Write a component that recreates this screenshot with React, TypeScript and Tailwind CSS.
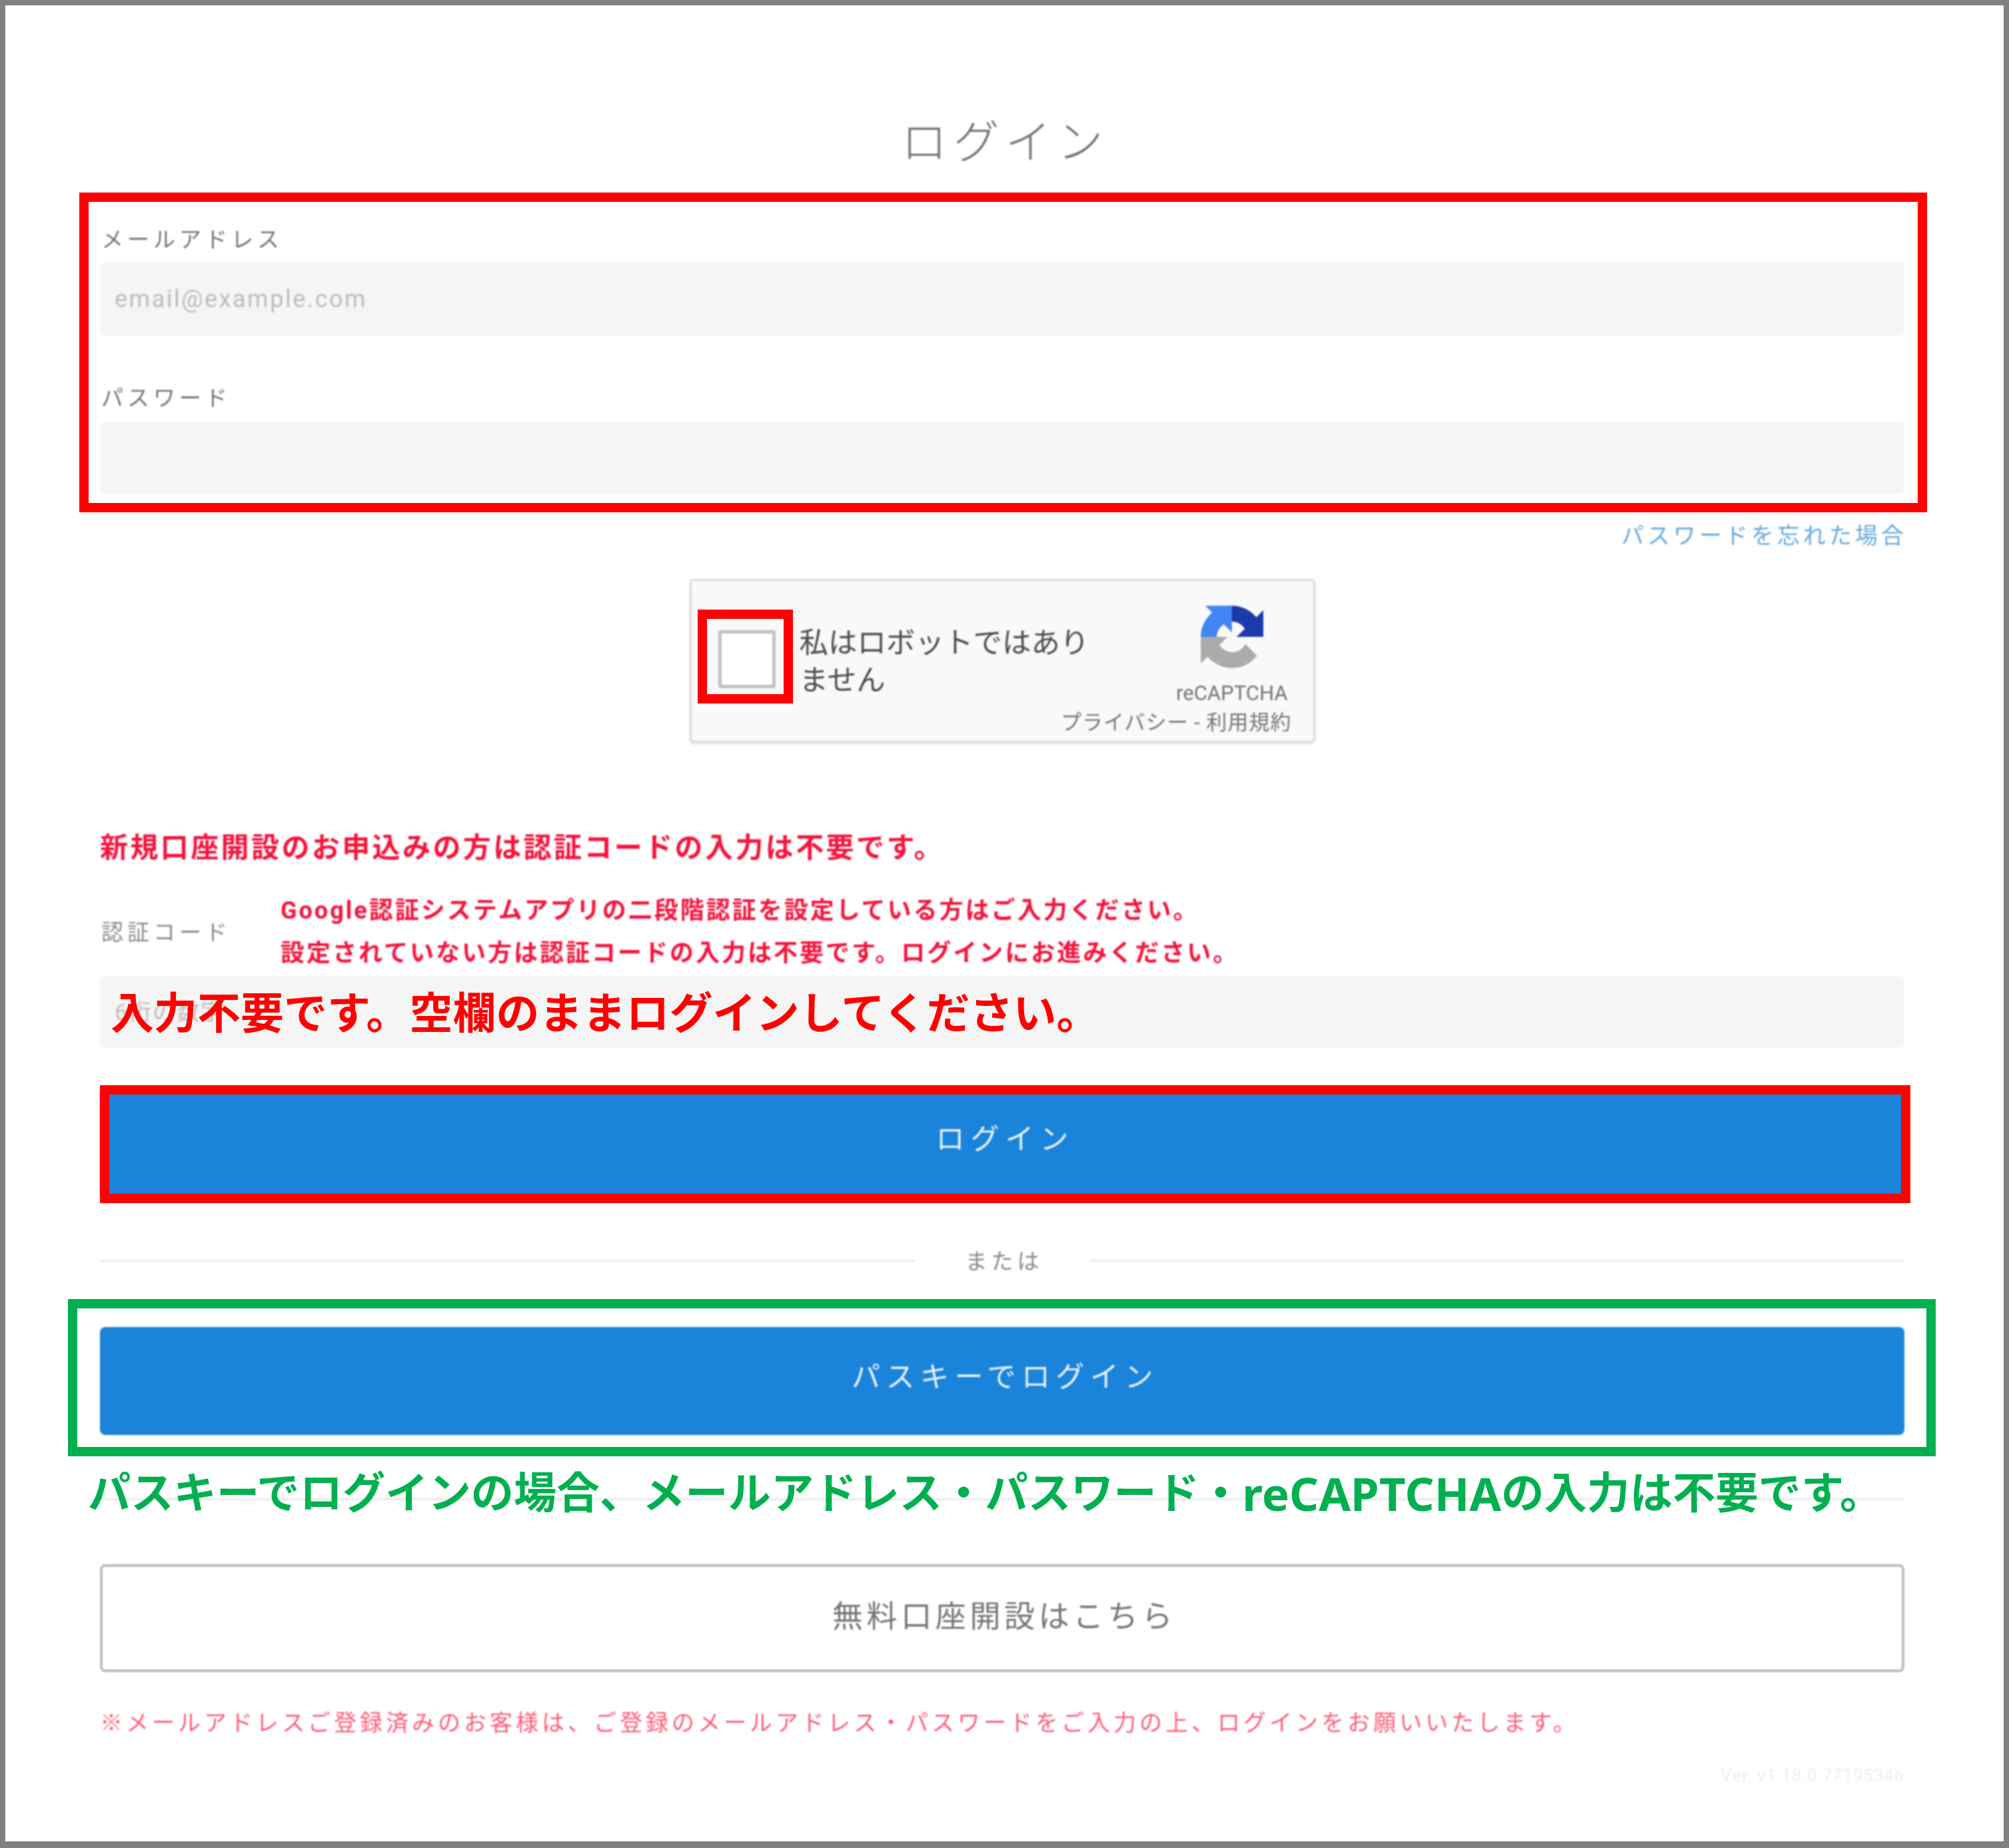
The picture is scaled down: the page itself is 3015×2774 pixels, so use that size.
const FONT = "font-['Roboto','Noto_Sans_CJK_JP',sans-serif]";

function Label({ text }: { text: string }) {
  return <div className="h-[50px] flex items-center pl-[2px] pt-[3px] text-[33px] tracking-[6px] text-[#757575]">{text}</div>;
}

function Divider() {
  return <div className="h-[3px] flex-1 bg-[#e8e8e8]" />;
}

function RecaptchaLogo() {
  return (
    <svg viewBox="0 0 64 64" className="w-[94px] h-[100px]">
      <path d="M64 31.955l-.033-1.37V4.687l-7.16 7.16C50.948 4.674 42.033.093 32.05.093c-10.4 0-19.622 4.96-25.458 12.64l11.736 11.86a15.55 15.55 0 0 1 4.754-5.334c2.05-1.6 4.952-2.906 8.968-2.906.485 0 .86.057 1.135.163 4.976.393 9.288 3.14 11.828 7.124l-8.307 8.307 32.294.009" fill="#1c3aa9" />
      <path d="M31.862.094l-1.37.033H4.594l7.16 7.16C4.58 13.147 0 22.06 0 32.046c0 10.4 4.96 19.622 12.64 25.458L24.5 45.768a15.55 15.55 0 0 1-5.334-4.754c-1.6-2.05-2.906-4.952-2.906-8.968 0-.485.057-.86.163-1.135.393-4.976 3.14-9.288 7.124-11.828l8.307 8.307L31.862.094" fill="#4285f4" />
      <path d="M.001 32.045l.033 1.37v25.898l7.16-7.16c5.86 7.173 14.774 11.754 24.76 11.754 10.4 0 19.622-4.96 25.458-12.64L45.677 39.4a15.55 15.55 0 0 1-4.754 5.334c-2.05 1.6-4.952 2.906-8.968 2.906-.485 0-.86-.057-1.135-.163-4.976-.393-9.288-3.14-11.828-7.124l8.307-8.307-32.294-.009" fill="#ababab" />
    </svg>
  );
}

export default function App() {
  return (
    <div className={`${FONT} relative w-[3015px] h-[2774px] bg-white border-[8px] border-b-[10px] border-[#808080] overflow-hidden`}>
      {/* login form */}
      <div className="blur-[1px] pl-[142px] pr-[149px] pt-[164px]">
        <h1 className="h-[80px] flex items-center justify-center pt-[6px] pl-[9px] text-[69px] tracking-[9px] font-light text-[#757575]">ログイン</h1>

        <div className="mt-[81px]"><Label text="メールアドレス" /></div>
        <div className="mt-[11px] h-[110px] bg-[#f5f5f5] rounded-[8px] flex items-center pl-[22px] text-[36px] tracking-[2.5px] text-[#bdbdbd]">email@example.com</div>

        <div className="mt-[67px]"><Label text="パスワード" /></div>
        <div className="mt-[12px] h-[109px] bg-[#f5f5f5] rounded-[8px]" />

        <div className="mt-[37px] h-[50px] flex items-center justify-end pl-[2px] -mr-[4px] text-[34px] tracking-[5px] text-[#64a8e0]">パスワードを忘れた場合</div>

        {/* recaptcha */}
        <div className="mt-[40px] mx-auto w-[939px] h-[246px] bg-[#f9f9f9] border-[3px] border-[#dcdcdc] rounded-[6px] shadow-[0_2px_3px_rgba(0,0,0,0.12)] flex">
          <div className="ml-[40px] mt-[74px] w-[86px] h-[87px] bg-white border-[5px] border-[#c1c1c1] rounded-[3px] shrink-0" />
          <div className="ml-[36px] mt-[66px] w-[470px] text-[43.5px] leading-[56px] text-[#4d4d4d]">私はロボットではありません</div>
          <div className="flex-1 flex flex-col items-end pr-[34px] pt-[34px]">
            <div className="w-[176px] flex justify-center"><RecaptchaLogo /></div>
            <div className="mt-[15px] h-[40px] leading-[40px] text-[31px] text-[#757575] mr-[4px]">reCAPTCHA</div>
          </div>
        </div>

        <div className="mt-[131px] h-[50px] flex items-center pt-[2px] text-[42px] tracking-[3.4px] font-bold text-[#f5143c] whitespace-nowrap">新規口座開設のお申込みの方は認証コードの入力は不要です。</div>

        <div className="mt-[39px] h-[128px] flex items-center">
          <div className="w-[271px] pl-[2px] pt-[1px] text-[33px] tracking-[6px] text-[#8a8a8a]">認証コード</div>
          <div className="text-[36px] leading-[64px] tracking-[3px] font-bold text-[#f5143c] whitespace-nowrap">
            <div>Google認証システムアプリの二段階認証を設定している方はご入力ください。</div>
            <div>設定されていない方は認証コードの入力は不要です。ログインにお進みください。</div>
          </div>
        </div>
        <div className="mt-[2px] h-[108px] bg-[#f5f5f5] rounded-[8px] flex items-center pl-[22px] text-[34px] tracking-[2px] text-[#bdbdbd]">6桁の数字</div>

        <button className="mt-[63px] w-full h-[164px] bg-[#1a83da] rounded-[8px] pl-[9px] pb-[16px] text-[43px] tracking-[9px] text-[#e8f2fb]">ログイン</button>

        <div className="mt-[67px] h-[50px] flex items-center">
          <Divider />
          <div className="w-[263px] pl-[6px] pt-[3px] text-center text-[33px] tracking-[6px] text-[#8a8a8a]">または</div>
          <Divider />
        </div>

        <button className="mt-[75px] w-full h-[162px] bg-[#1a83da] rounded-[8px] pl-[9px] pb-[12px] text-[43px] tracking-[8.5px] text-[#e8f2fb]">パスキーでログイン</button>

        <div className="mt-[95px] h-[3px] bg-[#e8e8e8]" />

        <button className="mt-[96px] w-full h-[162px] bg-white border-[4px] border-[#bdbdbd] rounded-[8px] pl-[6px] pb-[5px] text-[46px] tracking-[5.6px] text-[#757575]">無料口座開設はこちら</button>

        <div className="mt-[51px] h-[50px] flex items-center text-[34px] tracking-[5px] text-[#ff5c78] whitespace-nowrap">※メールアドレスご登録済みのお客様は、ご登録のメールアドレス・パスワードをご入力の上、ログインをお願いいたします。</div>

        <div className="mt-[34px] h-[40px] flex items-center justify-end text-[26px] tracking-[0.8px] text-[#eeeeee]">Ver. v1.18.0 77195346</div>
      </div>

      {/* recaptcha privacy line */}
      <div className="absolute left-[1584px] top-[1054px] blur-[1px] text-[31px] tracking-[1px] text-[#757575] whitespace-nowrap">プライバシー - 利用規約</div>

      {/* annotations laid over the screenshot */}
      <div className="absolute left-[111px] top-[281px] w-[2773px] h-[480px] border-[14px] border-[#ff0000]" />
      <div className="absolute left-[1039px] top-[907px] w-[143px] h-[141px] border-[14px] border-[#ff0000]" />
      <div className="absolute left-[142px] top-[1621px] w-[2717px] h-[177px] border-[14px] border-[#ff0000]" />
      <div className="absolute left-[94px] top-[1942px] w-[2803px] h-[236px] border-[14px] border-[#00b050]" />
      <div className="absolute left-[158px] top-[1470px] h-[90px] flex items-center text-[65px] font-bold text-[#ff0000] whitespace-nowrap">入力不要です。空欄のままログインしてください。</div>
      <div className="absolute left-[124px] top-[2189px] h-[90px] flex items-center text-[64.3px] font-bold text-[#00b050] whitespace-nowrap">
        パスキーでログインの場合、メールアドレス・パスワード・<span className="font-['Noto_Sans'] text-[69px]">reCAPTCHA</span>の入力は不要です。
      </div>
    </div>
  );
}
